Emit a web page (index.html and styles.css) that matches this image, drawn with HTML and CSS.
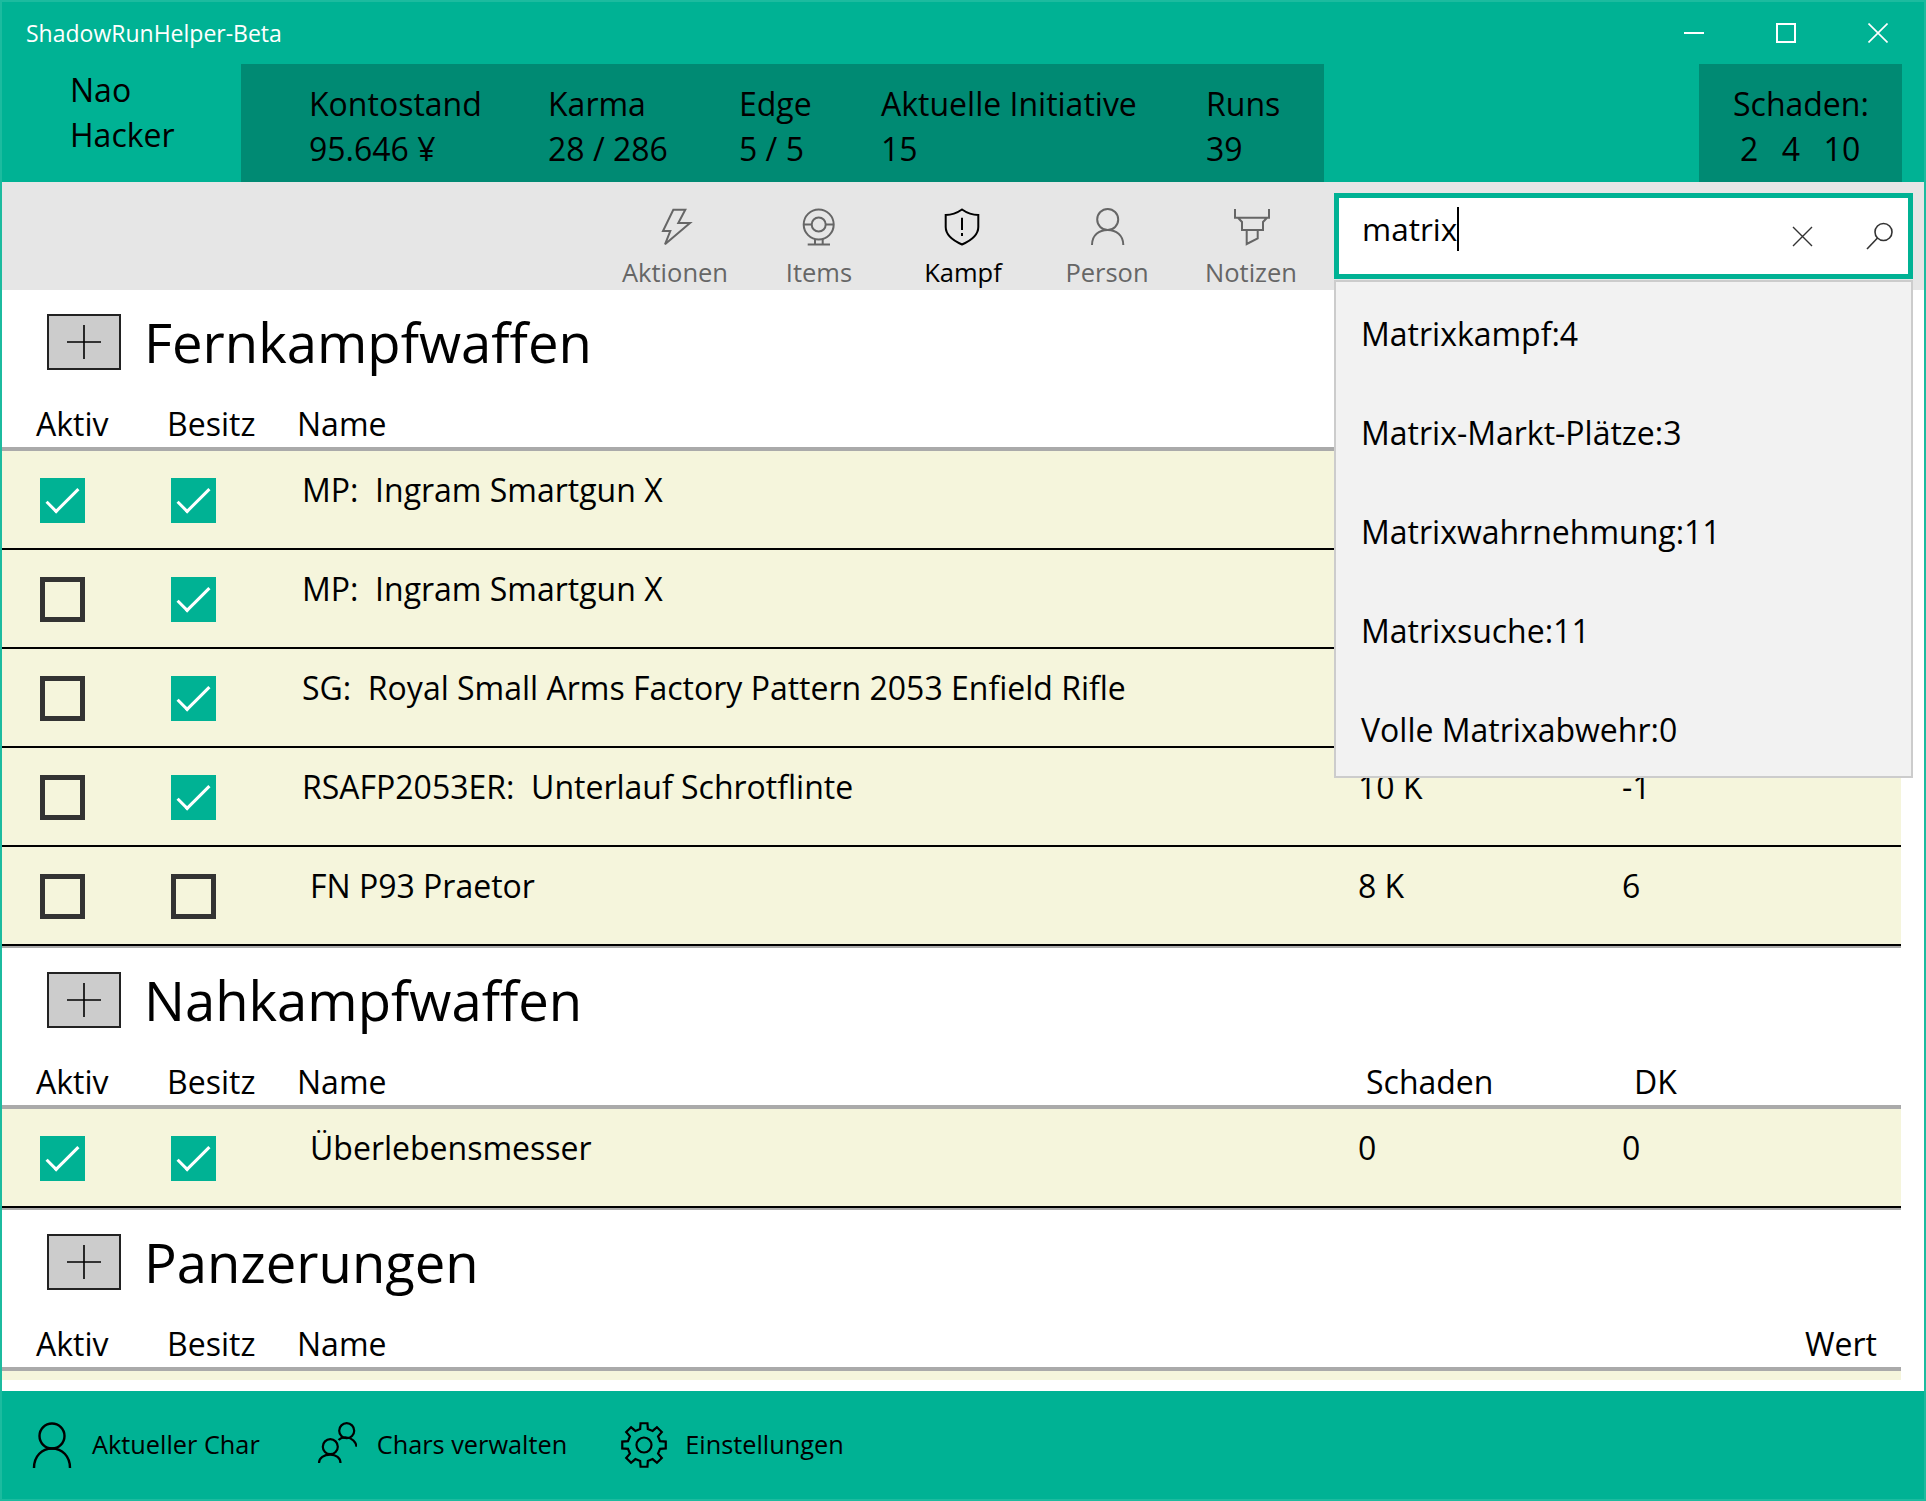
FILE: index.html
```html
<!DOCTYPE html>
<html lang="de">
<head>
    <meta charset="UTF-8">
    <title>ShadowRunHelper-Beta</title>
    <link rel="stylesheet" href="styles.css">
</head>
<body>
    <div class="window">
        <div class="titlebar">
            <span class="app-title">ShadowRunHelper-Beta</span>
            <div class="window-btns">
                <svg width="20" height="20" viewBox="0 0 20 20"><path d="M0 10H20" stroke="#fff" stroke-width="2"/></svg>
                <svg width="20" height="20" viewBox="0 0 20 20"><rect x="1" y="1" width="18" height="18" fill="none" stroke="#fff" stroke-width="2"/></svg>
                <svg width="20" height="20" viewBox="0 0 20 20"><path d="M0.5 0.5L19.5 19.5M19.5 0.5L0.5 19.5" stroke="#fff" stroke-width="1.6"/></svg>
            </div>
        </div>

        <div class="header">
            <div class="char-name">
                <div>Nao</div>
                <div>Hacker</div>
            </div>
            <div class="stats">
                <div class="stat stat-konto"><div>Kontostand</div><div>95.646 ¥</div></div>
                <div class="stat stat-karma"><div>Karma</div><div>28 / 286</div></div>
                <div class="stat stat-edge"><div>Edge</div><div>5 / 5</div></div>
                <div class="stat stat-ini"><div>Aktuelle Initiative</div><div>15</div></div>
                <div class="stat"><div>Runs</div><div>39</div></div>
            </div>
            <div class="damage">
                <div>Schaden:</div>
                <div class="damage-values"><span>2</span><span>4</span><span>10</span></div>
            </div>
        </div>

        <div class="navbar">
            <div class="nav-items">
                <div class="nav-item">
                    <svg width="38" height="38" viewBox="0 0 38 38" fill="none" stroke="currentColor" stroke-width="2"><path d="M17.3 1.7H29.3L22.3 15H34L9 36.3L14.3 23H7Z"/></svg>
                    <span>Aktionen</span>
                </div>
                <div class="nav-item">
                    <svg width="38" height="38" viewBox="0 0 38 38" fill="none" stroke="currentColor" stroke-width="2"><circle cx="18.7" cy="16.5" r="15"/><circle cx="18.7" cy="16.5" r="7"/><path d="M3.7 16.5H11.7M25.7 16.5H33.7M15 31V36M22.7 31V36M7.7 36.5H30"/></svg>
                    <span>Items</span>
                </div>
                <div class="nav-item active">
                    <svg width="38" height="38" viewBox="0 0 38 38" fill="none" stroke="currentColor" stroke-width="2"><path d="M18 1.5C13 5 7 7 1.7 7V19C1.7 27 10 33 18 36.5C26 33 34.3 27 34.3 19V7C29 7 23 5 18 1.5Z"/><path d="M18 9.7V22M18 25V28"/></svg>
                    <span>Kampf</span>
                </div>
                <div class="nav-item">
                    <svg width="38" height="38" viewBox="0 0 38 38" fill="none" stroke="currentColor" stroke-width="2"><circle cx="19.7" cy="11.5" r="10.5"/><path d="M4 37C4 27 11 22 19.7 22C28 22 35.3 27 35.3 37"/></svg>
                    <span>Person</span>
                </div>
                <div class="nav-item">
                    <svg width="38" height="38" viewBox="0 0 38 38" fill="none" stroke="currentColor" stroke-width="2"><path d="M3 1V9.7H37V1M6 9.7L10 14V22H31V14L35 9.7M14.7 22V36L25.7 30.3V22"/></svg>
                    <span>Notizen</span>
                </div>
            </div>
            <div class="search-box">
                <span class="search-text">matrix</span>
                <svg class="search-clear" width="21" height="21" viewBox="0 0 21 21"><path d="M1 1L20 20M20 1L1 20" stroke="#333" stroke-width="1.4"/></svg>
                <svg class="search-icon" width="28" height="28" viewBox="0 0 28 28" fill="none" stroke="#333" stroke-width="1.6"><circle cx="17.5" cy="10" r="8.5"/><path d="M11.5 16L1 27"/></svg>
            </div>
            <div class="suggestions">
                <div class="suggestion">Matrixkampf:4</div>
                <div class="suggestion">Matrix-Markt-Plätze:3</div>
                <div class="suggestion">Matrixwahrnehmung:11</div>
                <div class="suggestion">Matrixsuche:11</div>
                <div class="suggestion">Volle Matrixabwehr:0</div>
            </div>
        </div>

        <div class="content">
            <div class="section">
                <div class="section-head">
                    <div class="add-btn"><svg width="34" height="34" viewBox="0 0 34 34"><path d="M0 17H34M17 0V34" stroke="#000" stroke-width="1.6"/></svg></div>
                    <h2>Fernkampfwaffen</h2>
                </div>
                <div class="table-head">
                    <span>Aktiv</span><span>Besitz</span><span>Name</span>
                </div>
                <div class="row">
                    <div class="check on"></div><div class="check on"></div>
                    <div class="cell-name">MP:&nbsp; Ingram Smartgun X</div>
                </div>
                <div class="row">
                    <div class="check"></div><div class="check on"></div>
                    <div class="cell-name">MP:&nbsp; Ingram Smartgun X</div>
                </div>
                <div class="row">
                    <div class="check"></div><div class="check on"></div>
                    <div class="cell-name">SG:&nbsp; Royal Small Arms Factory Pattern 2053 Enfield Rifle</div>
                </div>
                <div class="row">
                    <div class="check"></div><div class="check on"></div>
                    <div class="cell-name">RSAFP2053ER:&nbsp; Unterlauf Schrotflinte</div>
                    <div class="cell-val">10 K</div><div class="cell-val">-1</div>
                </div>
                <div class="row last">
                    <div class="check"></div><div class="check"></div>
                    <div class="cell-name plain">FN P93 Praetor</div>
                    <div class="cell-val">8 K</div><div class="cell-val">6</div>
                </div>
            </div>

            <div class="section">
                <div class="section-head">
                    <div class="add-btn"><svg width="34" height="34" viewBox="0 0 34 34"><path d="M0 17H34M17 0V34" stroke="#000" stroke-width="1.6"/></svg></div>
                    <h2>Nahkampfwaffen</h2>
                </div>
                <div class="table-head">
                    <span>Aktiv</span><span>Besitz</span><span>Name</span><span class="col-dmg">Schaden</span><span class="col-dk">DK</span>
                </div>
                <div class="row last">
                    <div class="check on"></div><div class="check on"></div>
                    <div class="cell-name plain">Überlebensmesser</div>
                    <div class="cell-val">0</div><div class="cell-val">0</div>
                </div>
            </div>

            <div class="section">
                <div class="section-head">
                    <div class="add-btn"><svg width="34" height="34" viewBox="0 0 34 34"><path d="M0 17H34M17 0V34" stroke="#000" stroke-width="1.6"/></svg></div>
                    <h2>Panzerungen</h2>
                </div>
                <div class="table-head">
                    <span>Aktiv</span><span>Besitz</span><span>Name</span><span class="col-wert">Wert</span>
                </div>
                <div class="row"></div>
            </div>
        </div>

        <div class="footer">
            <div class="foot-item">
                <svg width="40" height="46" viewBox="0 0 40 46" fill="none" stroke="#000" stroke-width="2.4"><circle cx="20" cy="14" r="12.5"/><path d="M2 46C2 34 10 26.5 20 26.5C30 26.5 38 34 38 46"/></svg>
                <span>Aktueller Char</span>
            </div>
            <div class="foot-item foot-chars">
                <svg width="40" height="46" viewBox="0 0 40 46" fill="none" stroke="#000" stroke-width="2.2"><circle cx="29.7" cy="8.7" r="7.5"/><path d="M21.5 18C23 16.5 26 15 29.7 15.5C35 16 39 20 39.5 24.7"/><circle cx="13.3" cy="24.7" r="7.5"/><path d="M2 41C2 36 7 32.7 13.3 32.7C19 32.7 23.5 36 23.5 41"/></svg>
                <span>Chars verwalten</span>
            </div>
            <div class="foot-item foot-gear">
                <svg width="46" height="46" viewBox="0 0 46 46" fill="none" stroke="#000" stroke-width="2.2"><path d="M19.15 6.96L19.56 1.27H26.44L26.85 6.96L31.62 8.93L35.93 5.2L40.8 10.07L37.07 14.38L39.04 19.15L44.73 19.56V26.44L39.04 26.85L37.07 31.62L40.8 35.93L35.93 40.8L31.62 37.07L26.85 39.04L26.44 44.73H19.56L19.15 39.04L14.38 37.07L10.07 40.8L5.2 35.93L8.93 31.62L6.96 26.85L1.27 26.44V19.56L6.96 19.15L8.93 14.38L5.2 10.07L10.07 5.2L14.38 8.93Z"/><circle cx="23" cy="23" r="7.5"/></svg>
                <span>Einstellungen</span>
            </div>
        </div>
    </div>
</body>
</html>
```

FILE: styles.css
```css
html, body {
    margin: 0;
    height: 100%;
}

body {
    font-family: "Open Sans", "Noto Sans", sans-serif;
    color: #000;
    background: #fff;
}

.window {
    display: flex;
    flex-direction: column;
    height: 1501px;
    box-sizing: border-box;
    border-left: 2px solid #1cbb9f;
    border-right: 2px solid #1cbb9f;
    overflow: hidden;
}

.titlebar {
    display: flex;
    justify-content: space-between;
    align-items: center;
    height: 64px;
    box-sizing: border-box;
    padding: 0 36px 0 24px;
    background: #00b294;
    border-top: 2px solid #1cbb9f;
}

.app-title {
    font-size: 23px;
    color: #fff;
}

.window-btns {
    display: flex;
    gap: 72px;
}

.header {
    display: flex;
    height: 118px;
    background: #00b294;
    font-size: 32px;
    line-height: 45px;
}

.char-name {
    width: 239px;
    box-sizing: border-box;
    padding: 3px 0 0 68px;
}

.stats {
    display: flex;
    width: 1083px;
    box-sizing: border-box;
    padding: 17px 0 0 68px;
    background: #008a73;
}

.stat-konto { width: 239px; }
.stat-karma { width: 191px; }
.stat-edge { width: 142px; }
.stat-ini { width: 325px; }

.damage {
    width: 203px;
    box-sizing: border-box;
    margin-left: auto;
    margin-right: 22px;
    padding: 17px 0 0 34px;
    background: #008a73;
}

.damage-values {
    display: flex;
    gap: 23.5px;
    padding-left: 7px;
}

.navbar {
    position: relative;
    display: flex;
    height: 108px;
    background: #e6e6e6;
}

.nav-items {
    display: flex;
    margin-left: 601px;
}

.nav-item {
    display: flex;
    flex-direction: column;
    align-items: center;
    width: 144px;
    padding-top: 26px;
    box-sizing: border-box;
    color: #666;
    font-size: 25.5px;
    line-height: 36px;
}

.nav-item svg {
    margin-bottom: 8px;
}

.nav-item.active {
    color: #000;
}

.search-box {
    position: absolute;
    left: 1332px;
    top: 11px;
    display: flex;
    align-items: center;
    width: 579px;
    height: 86px;
    box-sizing: border-box;
    padding: 0 14px 0 23px;
    background: #fff;
    border: 5px solid #00b294;
    font-size: 31.5px;
}

.search-text {
    flex: 1;
    margin-top: -15px;
}

.search-text::after {
    content: "";
    display: inline-block;
    width: 2px;
    height: 44px;
    background: #000;
    vertical-align: -10px;
}

.search-clear {
    margin-right: 53px;
}

.suggestions {
    position: absolute;
    left: 1332px;
    top: 98px;
    z-index: 5;
    width: 579px;
    height: 498px;
    box-sizing: border-box;
    background: #f2f2f2;
    border: 2px solid #ccc;
    font-size: 32px;
}

.suggestion {
    height: 99px;
    padding-left: 25px;
    line-height: 104px;
}

.content {
    flex: 1;
    overflow: hidden;
    margin-bottom: 11px;
    padding-right: 23px;
}

.section-head {
    display: flex;
    align-items: center;
    height: 56px;
    padding: 24px 0 0 45px;
}

.section-head h2 {
    margin: 0 0 0 23px;
    font-size: 54.4px;
    font-weight: 400;
}

.add-btn {
    display: flex;
    align-items: center;
    justify-content: center;
    width: 74px;
    height: 56px;
    box-sizing: border-box;
    background: #ccc;
    border: 2px solid #222;
}

.table-head {
    position: relative;
    display: flex;
    height: 81px;
    box-sizing: border-box;
    padding: 33px 0 0 34px;
    border-bottom: 4px solid #aaa;
    font-size: 32px;
    line-height: 42px;
}

.table-head span:nth-child(1) { width: 131px; }
.table-head span:nth-child(2) { width: 130px; }

.table-head .col-dmg {
    position: absolute;
    left: 1364px;
}

.table-head .col-dk {
    position: absolute;
    left: 1632px;
}

.table-head .col-wert {
    position: absolute;
    right: 24px;
}

.row {
    display: grid;
    grid-template-columns: 131px 131px 1056px 264px 1fr;
    height: 99px;
    box-sizing: border-box;
    padding-left: 38px;
    background: #f5f5dc;
    border-bottom: 2px solid #000;
    font-size: 32px;
}

.row.last {
    margin-bottom: 2px;
    box-shadow: 0 2px 0 #aaa;
}

.cell-name {
    padding-top: 18px;
    line-height: 42px;
}

.cell-name.plain {
    padding-left: 8px;
}

.cell-val {
    padding-top: 18px;
    line-height: 42px;
}

.check {
    position: relative;
    width: 45px;
    height: 45px;
    margin-top: 27px;
    box-sizing: border-box;
    border: 5px solid #333;
}

.check.on {
    background: #00b294;
    border: none;
}

.check.on::after {
    content: "";
    position: absolute;
    left: 6px;
    top: 11px;
    width: 33px;
    height: 15px;
    box-sizing: border-box;
    border-left: 3px solid #fff;
    border-bottom: 3px solid #fff;
    transform: rotate(-45deg);
}

.footer {
    display: flex;
    align-items: center;
    height: 110px;
    box-sizing: border-box;
    background: #00b294;
    border-bottom: 2px solid #1cbb9f;
    padding-left: 30px;
    font-size: 25.3px;
}

.footer span {
    margin-top: -2px;
}

.foot-item {
    display: flex;
    align-items: center;
    gap: 20px;
    margin-right: 57px;
}

.foot-chars {
    gap: 20px;
    margin-right: 54px;
}

.foot-gear {
    gap: 18px;
}
```
